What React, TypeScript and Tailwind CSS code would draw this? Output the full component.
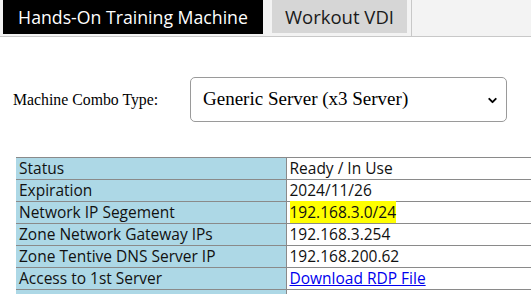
import { ChevronDown } from "lucide-react";

const rows: { label: string; value: string; kind?: "mark" | "link" }[] = [
  { label: "Status", value: "Ready / In Use" },
  { label: "Expiration", value: "2024/11/26" },
  { label: "Network IP Segement", value: "192.168.3.0/24", kind: "mark" },
  { label: "Zone Network Gateway IPs", value: "192.168.3.254" },
  { label: "Zone Tentive DNS Server IP", value: "192.168.200.62" },
  { label: "Access to 1st Server", value: "Download RDP File", kind: "link" },
  { label: "", value: "" },
];

export default function App() {
  return (
    <div className="w-[531px] h-[294px] overflow-hidden bg-white font-['Open_Sans',sans-serif]">
      {/* Tab bar */}
      <div className="flex h-[37px] bg-[#f3f3f3] border-b border-[#c8c8c8] pl-[3px]">
        <div className="flex h-[34px] w-[260px] items-center justify-center bg-black text-white text-[17.7px]">
          Hands-On Training Machine
        </div>
        <div className="ml-[9px] flex h-[33px] w-[135px] items-center justify-center bg-[#d6d6d6] text-[#1a1a1a] text-[18.5px]">
          Workout VDI
        </div>
        <div className="ml-[4px] h-[36px] w-px bg-[#c8c8c8]" />
      </div>

      {/* Combo type */}
      <div className="flex items-center mt-[40px] pl-[13px] h-[45px] font-['Liberation_Serif',serif]">
        <label className="w-[177px] text-[15.8px] text-black">Machine Combo Type:</label>
        <div className="relative flex h-[45px] w-[317px] items-center rounded-[5px] border border-[#9a9a9a] bg-white pl-[12px] text-[19px] text-black">
          Generic Server (x3 Server)
          <ChevronDown className="absolute right-[7px] top-[16px] h-[13px] w-[13px]" strokeWidth={3.5} />
        </div>
      </div>

      {/* Details table */}
      <table className="mt-[35px] ml-[16px] w-[530px] table-fixed border-collapse text-[15.5px] text-[#111]">
        <colgroup>
          <col className="w-[270px]" />
          <col />
        </colgroup>
        <tbody>
          {rows.map((r, i) => (
            <tr key={i} className="h-[22px]">
              <td className="border border-[#8a8a8a] border-l-0 bg-[#add8e6] px-[3px] py-0 leading-[21px] whitespace-nowrap">
                {r.label}
              </td>
              <td className="border border-[#8a8a8a] border-r-0 px-[3px] py-0 leading-[21px] whitespace-nowrap">
                {r.kind === "mark" ? (
                  <span className="bg-[#ffff00]">{r.value}</span>
                ) : r.kind === "link" ? (
                  <a href="#" className="text-[#0000ee] underline">
                    {r.value}
                  </a>
                ) : (
                  r.value
                )}
              </td>
            </tr>
          ))}
        </tbody>
      </table>
    </div>
  );
}
